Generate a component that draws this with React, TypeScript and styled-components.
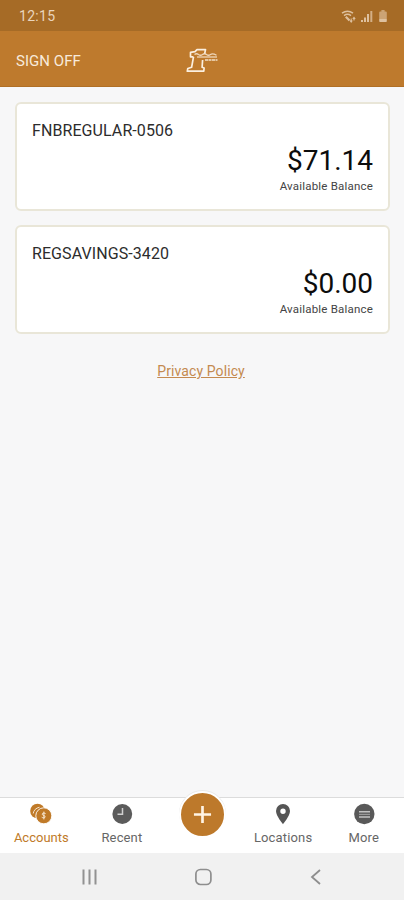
import React from 'react';
import styled, { createGlobalStyle } from 'styled-components';

const GlobalStyle = createGlobalStyle`
  * { box-sizing: border-box; }
  body { margin: 0; background: #f7f7f8; font-family: Roboto, sans-serif; }
`;

const Screen = styled.div`
  display: flex;
  flex-direction: column;
  height: 900px;
  overflow: hidden;
  background: #f7f7f8;
`;

const StatusBar = styled.div`
  flex: none;
  height: 31px;
  padding: 1px 15px 0 19px;
  display: flex;
  align-items: center;
  justify-content: space-between;
  background: #a66b26;
  color: #ead5bd;
  font-size: 14px;
  letter-spacing: 0.3px;
`;

const StatusIcons = styled.div`
  display: flex;
  align-items: center;
  gap: 4px;
  svg { display: block; }
`;

const Header = styled.header`
  flex: none;
  height: 56px;
  padding: 3px 16px 0;
  display: grid;
  grid-template-columns: 1fr auto 1fr;
  align-items: center;
  background: #be7a2d;
  border-bottom: 1px solid #b06f26;
`;

const SignOff = styled.button`
  justify-self: start;
  padding: 2px 0 0;
  border: 0;
  background: none;
  color: #f8eadb;
  font: 400 15px/20px Roboto, sans-serif;
  letter-spacing: 0.05px;
`;

const Accounts = styled.main`
  flex: 1;
  display: flex;
  flex-direction: column;
  gap: 14px;
  padding: 15px 14px 0 15px;
`;

const Card = styled.section`
  height: 109px;
  padding: 18px 15px 0 15px;
  border: 2px solid #e9e6d8;
  border-radius: 6px;
  background: #fff;
`;

const AccountName = styled.div`
  color: #2c2c2c;
  font-size: 16px;
  line-height: 18px;
  letter-spacing: 0.08px;
`;

const Balance = styled.div`
  margin-top: 3px;
  text-align: right;
  color: #0c0c0c;
  font-size: 28px;
  line-height: 36px;
`;

const BalanceLabel = styled.div`
  margin-top: -1px;
  text-align: right;
  color: #444;
  font-size: 11.5px;
  line-height: 16px;
  letter-spacing: 0.2px;
`;

const PrivacyLink = styled.a`
  align-self: center;
  margin: 13px 0 0 -3px;
  color: #c48a50;
  font-size: 14px;
  line-height: 20px;
  letter-spacing: 0.1px;
  text-decoration: underline;
`;

const TabBar = styled.nav`
  flex: none;
  height: 56px;
  display: grid;
  grid-template-columns: repeat(5, 1fr);
  padding-left: 1px;
  background: #fff;
  border-top: 1px solid #dcdcdc;
`;

const Tab = styled.div<{ $active?: boolean }>`
  display: flex;
  flex-direction: column;
  align-items: center;
  padding-top: 5px;
  gap: 4px;
  color: ${(p) => (p.$active ? '#c07a28' : '#666')};
  font-size: 13px;
  line-height: 18px;
  letter-spacing: ${(p) => (p.$active ? '0' : '0.15px')};
  svg { display: block; flex: none; }
`;

const AddSlot = styled.div`
  display: flex;
  justify-content: center;
  align-items: flex-start;
`;

const AddButton = styled.button`
  flex: none;
  margin-top: -7px;
  width: 47px;
  height: 47px;
  padding: 0;
  border: 2px solid #fff;
  border-radius: 50%;
  background: #bd792b;
  box-shadow: 0 -1px 0 #e9e9e9;
  svg { display: block; margin: 0 auto; }
`;

const SystemNav = styled.div`
  flex: none;
  height: 47px;
  padding: 1px 82px 0 81px;
  display: flex;
  align-items: center;
  justify-content: space-between;
  background: #f1f1f1;
  svg { display: block; }
`;

const Logo = () => (
  <svg width="32" height="26" viewBox="0 0 32 26" fill="none" stroke="#fbefdf">
    <path
      d="M7.500 9.800H4.500V5.400L9 4.600 11 2.600H19.500l-.8 4M16.600 13l-.5 7.300 2 .7-.3 3.200H1.300l.5-2.700 3.800-1.200L7.500 9.800"
      strokeWidth="1.700"
      strokeLinejoin="round"
    />
    <path d="M8.500 7.500q2-1.500 4 0t4 0 4 0 4 0 6 .8" strokeWidth="1.300" opacity=".8" />
    <path d="M11 10h20" strokeWidth="1.400" opacity=".75" />
    <path d="M19 13h12.500" strokeWidth="2.200" strokeDasharray="3 .5" opacity=".65" />
  </svg>
);

const WifiIcon = () => (
  <svg width="16" height="13" viewBox="0 0 16 13" fill="none" stroke="#dec19f" strokeWidth="1.500">
    <path d="M1 3.200Q6.500-.8 12 3.200M3 5.600q3.500-2.600 7 0" />
    <path d="m4.800 6.800 3.700 3.700" strokeWidth="2.200" />
    <path d="M10.200 8.500V12M9 10.500l1.200 1.500 1.100-1.500M13 10.500v-3M11.800 9 13 7.500 14.200 9" strokeWidth="1.100" />
  </svg>
);

const SignalIcon = () => (
  <svg width="12" height="13" viewBox="0 0 12 13" fill="#dec19f">
    <path d="M0 10h2v2H0zM3 7.500h2V12H3zM6 4h2v8H6z" />
    <path d="M9.300 1h2v11h-2z" opacity=".8" />
  </svg>
);

const BatteryIcon = () => (
  <svg width="12" height="13" viewBox="0 0 12 13" fill="#dec19f">
    <path d="M4.400 0h3.200v1.400h1.200q1 0 1 1V9H2.200V2.400q0-1 1-1h1.200z" opacity=".65" />
    <path d="M2.200 9h7.600v2.200q0 .8-.8.8H3q-.8 0-.8-.8z" />
  </svg>
);

const CoinsIcon = () => (
  <svg width="24" height="22" viewBox="0 0 24 22">
    <circle cx="8.500" cy="8" r="7.300" fill="#c07a28" />
    <path d="M4.200 10.500Q5 5.500 10.500 4.200" fill="none" stroke="#f5e5d2" strokeWidth="1" />
    <circle cx="14.800" cy="12.800" r="8" fill="#c07a28" stroke="#fff" strokeWidth=".9" />
    <path d="M16.600 10.600q-1.800-1.100-2.900-.3c-1.300 1.200.2 1.900 1.300 2.300 1.700.6 1.500 2-.1 2.300q-1.200 0-2.200-.7M14.900 8.600v7.800" fill="none" stroke="#f8e8d4" strokeWidth="1" />
  </svg>
);

const ClockIcon = () => (
  <svg width="22" height="22" viewBox="0 0 22 22">
    <circle cx="11.300" cy="11" r="9.900" fill="#5b5b5b" />
    <path d="M11.500 5v6.200h-5" fill="none" stroke="#d0d0d0" strokeWidth="1.500" />
  </svg>
);

const PinIcon = () => (
  <svg width="22" height="22" viewBox="0 0 22 22">
    <path d="M11 1a7 7 0 0 1 7 7c0 5-7 13.200-7 13.200S4 13 4 8a7 7 0 0 1 7-7Zm0 4.500a2.700 2.700 0 1 0 0 5.400 2.700 2.700 0 0 0 0-5.400Z" fill="#555" fillRule="evenodd" />
  </svg>
);

const MoreIcon = () => (
  <svg width="22" height="22" viewBox="0 0 22 22">
    <circle cx="11.300" cy="11" r="10.200" fill="#595959" />
    <path d="M6 8.800h11M6 14h11" stroke="#c2c2c2" strokeWidth="1.400" />
    <path d="M6 11.400h11" stroke="#999" strokeWidth="1.200" />
  </svg>
);

const accounts = [
  { name: 'FNBREGULAR-0506', balance: '$71.14' },
  { name: 'REGSAVINGS-3420', balance: '$0.00' },
];

export default function App() {
  return (
    <Screen>
      <GlobalStyle />
      <StatusBar>
        <span>12:15</span>
        <StatusIcons>
          <WifiIcon />
          <SignalIcon />
          <BatteryIcon />
        </StatusIcons>
      </StatusBar>
      <Header>
        <SignOff>SIGN OFF</SignOff>
        <Logo />
      </Header>
      <Accounts>
        {accounts.map((a) => (
          <Card key={a.name}>
            <AccountName>{a.name}</AccountName>
            <Balance>{a.balance}</Balance>
            <BalanceLabel>Available Balance</BalanceLabel>
          </Card>
        ))}
        <PrivacyLink>Privacy Policy</PrivacyLink>
      </Accounts>
      <TabBar>
        <Tab $active><CoinsIcon />Accounts</Tab>
        <Tab><ClockIcon />Recent</Tab>
        <AddSlot>
          <AddButton aria-label="Add">
            <svg width="19" height="19" viewBox="0 0 20 20" stroke="#fff3e4" strokeWidth="2.800">
              <path d="M10 1v18M1 10h18" />
            </svg>
          </AddButton>
        </AddSlot>
        <Tab><PinIcon />Locations</Tab>
        <Tab><MoreIcon />More</Tab>
      </TabBar>
      <SystemNav>
        <svg width="17" height="16" viewBox="0 0 17 16" stroke="#929292" strokeWidth="2">
          <path d="M2.500 .5v15M8.500 .5v15M14.500 .5v15" />
        </svg>
        <svg width="18" height="18" viewBox="0 0 18 18">
          <rect x=".9" y="1.500" width="15" height="15" rx="4.500" fill="none" stroke="#8e8e8e" strokeWidth="1.700" />
        </svg>
        <svg width="12" height="16" viewBox="0 0 12 16" fill="none" stroke="#8e8e8e" strokeWidth="1.800">
          <path d="M10 1 2 8l8 7" />
        </svg>
      </SystemNav>
    </Screen>
  );
}
